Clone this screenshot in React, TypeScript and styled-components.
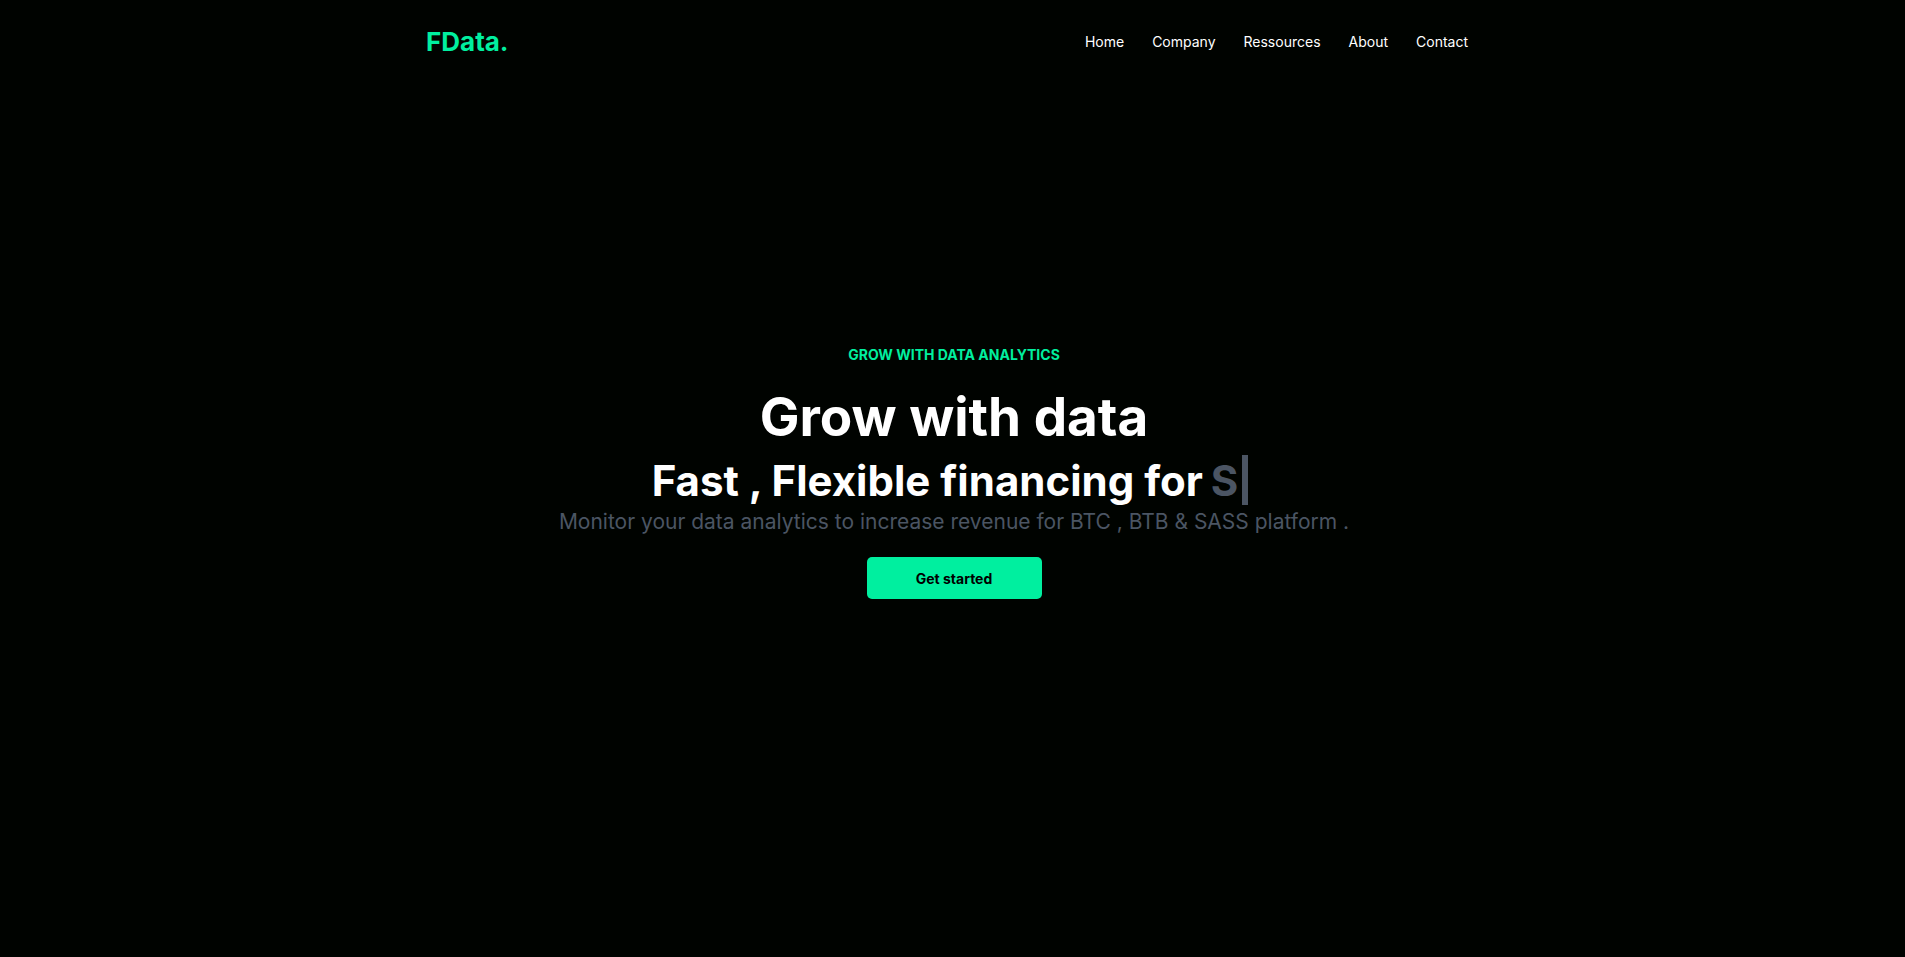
import React from "react";
import styled, { createGlobalStyle } from "styled-components";

const Global = createGlobalStyle`
  * { box-sizing: border-box; }
  html, body { margin: 0; padding: 0; background: #000300; }
  body {
    font-family: Inter, "Noto Sans", Arial, sans-serif;
    color: #ffffff;
  }
`;

const Page = styled.div`
  min-height: 100vh;
  background: #000300;
  display: flex;
  flex-direction: column;
`;

const NavBar = styled.nav`
  width: 1061px;
  margin: 0 auto;
  padding-left: 4px;
  height: 84px;
  display: flex;
  align-items: center;
  justify-content: space-between;
`;

const Logo = styled.h1`
  margin: 0;
  font-size: 26px;
  font-weight: 700;
  color: #00ef9f;
  line-height: 1;
`;

const Menu = styled.ul`
  list-style: none;
  margin: 0;
  padding: 0;
  display: flex;
`;

const MenuItem = styled.li`
  padding: 0 14px;
  font-size: 14px;
  line-height: 20px;
  color: #ffffff;
  cursor: pointer;
  &:last-child { padding-right: 15px; }
`;

const Hero = styled.section`
  display: flex;
  flex-direction: column;
  align-items: center;
  text-align: center;
  padding-top: 261px;
  padding-left: 3px;
`;

const Eyebrow = styled.p`
  margin: 0;
  font-size: 14px;
  line-height: 20px;
  font-weight: 700;
  color: #00ef9f;
`;

const Title = styled.h1`
  margin: 22px 0 0;
  font-size: 53px;
  line-height: 60px;
  font-weight: 700;
  color: #ffffff;
`;

const Subtitle = styled.div`
  margin-top: 9px;
  padding-right: 8px;
  display: flex;
  align-items: center;
  font-size: 42px;
  line-height: 50px;
  font-weight: 700;
  color: #ffffff;
`;

const Typed = styled.span`
  margin-left: 8px;
  color: #4b5563;
`;

const Cursor = styled.span`
  display: inline-block;
  width: 6px;
  height: 50px;
  background: #4b5563;
  margin: -2px 0 0 4px;
`;

const Lead = styled.p`
  margin: 2px 0 0;
  font-size: 21px;
  line-height: 28px;
  font-weight: 400;
  color: #4b5563;
`;

const CTA = styled.button`
  margin-top: 21px;
  width: 175px;
  height: 42px;
  border: none;
  border-radius: 5px;
  background: #00ef9f;
  color: #000000;
  font-family: Inter, "Noto Sans", Arial, sans-serif;
  font-size: 14px;
  font-weight: 700;
  cursor: pointer;
`;

const items = ["Home", "Company", "Ressources", "About", "Contact"];

export default function App() {
  return (
    <Page>
      <Global />
      <NavBar>
        <Logo>FData.</Logo>
        <Menu>
          {items.map((i) => (
            <MenuItem key={i}>{i}</MenuItem>
          ))}
        </Menu>
      </NavBar>
      <Hero>
        <Eyebrow>GROW WITH DATA ANALYTICS</Eyebrow>
        <Title>Grow with data</Title>
        <Subtitle>
          <span>Fast , Flexible financing for</span>
          <Typed>S</Typed>
          <Cursor />
        </Subtitle>
        <Lead>Monitor your data analytics to increase revenue for BTC , BTB &amp; SASS platform .</Lead>
        <CTA>Get started</CTA>
      </Hero>
    </Page>
  );
}
